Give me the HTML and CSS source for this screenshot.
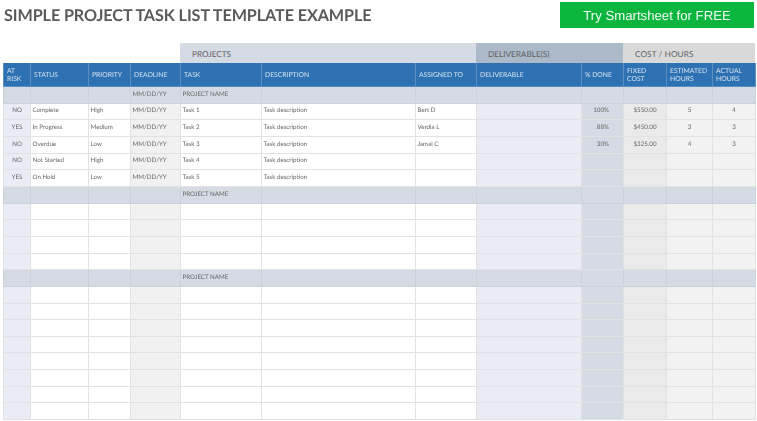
FILE: index.html
```html
<!DOCTYPE html>
<html lang="en">
<head>
<meta charset="utf-8">
<title>Simple Project Task List Template Example</title>
<link rel="stylesheet" href="styles.css">
</head>
<body>
<header class="top">
  <h1 class="title">SIMPLE PROJECT TASK LIST TEMPLATE EXAMPLE</h1>
  <a class="cta" href="#">Try Smartsheet for FREE</a>
</header>
<div class="bands">
  <div class="band band-projects">PROJECTS</div>
  <div class="band band-deliverables">DELIVERABLE(S)</div>
  <div class="band band-cost">COST / HOURS</div>
</div>
<table class="sheet">
  <colgroup>
    <col class="c-risk"><col class="c-status"><col class="c-priority"><col class="c-deadline"><col class="c-task"><col class="c-desc"><col class="c-assigned"><col class="c-deliv"><col class="c-done"><col class="c-fixed"><col class="c-est"><col class="c-actual">
  </colgroup>
  <thead>
    <tr><th>AT<br>RISK</th><th>STATUS</th><th>PRIORITY</th><th>DEADLINE</th><th>TASK</th><th>DESCRIPTION</th><th>ASSIGNED TO</th><th>DELIVERABLE</th><th>% DONE</th><th>FIXED<br>COST</th><th>ESTIMATED<br>HOURS</th><th>ACTUAL<br>HOURS</th></tr>
  </thead>
  <tbody>
    <tr class="group"><td></td><td></td><td></td><td>MM/DD/YY</td><td>PROJECT NAME</td><td></td><td></td><td></td><td></td><td></td><td></td><td></td></tr>
    <tr><td class="mid">NO</td><td>Complete</td><td>High</td><td>MM/DD/YY</td><td>Task 1</td><td>Task description</td><td>Bert D</td><td></td><td class="end">100%</td><td class="mid">$550.00</td><td class="mid">5</td><td class="mid">4</td></tr>
    <tr><td class="mid">YES</td><td>In Progress</td><td>Medium</td><td>MM/DD/YY</td><td>Task 2</td><td>Task description</td><td>Verdia L</td><td></td><td class="end">88%</td><td class="mid">$450.00</td><td class="mid">3</td><td class="mid">3</td></tr>
    <tr><td class="mid">NO</td><td>Overdue</td><td>Low</td><td>MM/DD/YY</td><td>Task 3</td><td>Task description</td><td>Jamal C</td><td></td><td class="end">30%</td><td class="mid">$325.00</td><td class="mid">4</td><td class="mid">3</td></tr>
    <tr><td class="mid">NO</td><td>Not Started</td><td>High</td><td>MM/DD/YY</td><td>Task 4</td><td>Task description</td><td></td><td></td><td></td><td></td><td></td><td></td></tr>
    <tr><td class="mid">YES</td><td>On Hold</td><td>Low</td><td>MM/DD/YY</td><td>Task 5</td><td>Task description</td><td></td><td></td><td></td><td></td><td></td><td></td></tr>
    <tr class="group"><td></td><td></td><td></td><td></td><td>PROJECT NAME</td><td></td><td></td><td></td><td></td><td></td><td></td><td></td></tr>
    <tr><td></td><td></td><td></td><td></td><td></td><td></td><td></td><td></td><td></td><td></td><td></td><td></td></tr>
    <tr><td></td><td></td><td></td><td></td><td></td><td></td><td></td><td></td><td></td><td></td><td></td><td></td></tr>
    <tr><td></td><td></td><td></td><td></td><td></td><td></td><td></td><td></td><td></td><td></td><td></td><td></td></tr>
    <tr><td></td><td></td><td></td><td></td><td></td><td></td><td></td><td></td><td></td><td></td><td></td><td></td></tr>
    <tr class="group"><td></td><td></td><td></td><td></td><td>PROJECT NAME</td><td></td><td></td><td></td><td></td><td></td><td></td><td></td></tr>
    <tr><td></td><td></td><td></td><td></td><td></td><td></td><td></td><td></td><td></td><td></td><td></td><td></td></tr>
    <tr><td></td><td></td><td></td><td></td><td></td><td></td><td></td><td></td><td></td><td></td><td></td><td></td></tr>
    <tr><td></td><td></td><td></td><td></td><td></td><td></td><td></td><td></td><td></td><td></td><td></td><td></td></tr>
    <tr><td></td><td></td><td></td><td></td><td></td><td></td><td></td><td></td><td></td><td></td><td></td><td></td></tr>
    <tr><td></td><td></td><td></td><td></td><td></td><td></td><td></td><td></td><td></td><td></td><td></td><td></td></tr>
    <tr><td></td><td></td><td></td><td></td><td></td><td></td><td></td><td></td><td></td><td></td><td></td><td></td></tr>
    <tr><td></td><td></td><td></td><td></td><td></td><td></td><td></td><td></td><td></td><td></td><td></td><td></td></tr>
    <tr><td></td><td></td><td></td><td></td><td></td><td></td><td></td><td></td><td></td><td></td><td></td><td></td></tr>
  </tbody>
</table>
</body>
</html>
```

FILE: styles.css
```css
* { box-sizing: border-box; }
html, body { margin: 0; height: 421px; overflow: hidden; background: #fff; }
body { padding-left: 3px; font-family: "Lato", "Liberation Sans", sans-serif; color: #666; text-rendering: geometricPrecision; }

.top { display: flex; justify-content: space-between; align-items: flex-start; height: 43px; padding: 2px 3px 0 1px; }
.title { margin: 1.5px 0 0; font-family: "Lato", sans-serif; font-size: 16.2px; font-weight: 700; line-height: 24px; letter-spacing: -0.1px; color: #5a5a5a; white-space: nowrap; filter: blur(0.3px); }
.cta { display: flex; align-items: center; justify-content: center; width: 194px; height: 26px; background: #0cb53e; color: #f2fbf4; font-family: "Liberation Sans", sans-serif; font-size: 13.2px; text-decoration: none; filter: blur(0.25px); }

.bands { display: flex; height: 20px; padding-left: 177px; }
.band { display: flex; align-items: center; padding-top: 1px; font-size: 8.2px; font-weight: 400; color: #606060; }
.band-projects { width: 296px; padding-left: 12px; background: #d5dbe4; }
.band-deliverables { width: 147px; padding-left: 12px; background: #acb9c9; }
.band-cost { width: 132px; padding-left: 12px; background: #d9d9d9; letter-spacing: 0.1px; }

.sheet { border-collapse: collapse; table-layout: fixed; width: 752px; font-size: 6.2px; filter: blur(0.3px); }
.c-risk { width: 27px; background: #e9ecf4; }
.c-status { width: 58px; }
.c-priority { width: 42px; }
.c-deadline { width: 50px; background: #f1f1f1; }
.c-task { width: 81px; }
.c-desc { width: 154px; }
.c-assigned { width: 61px; }
.c-deliv { width: 105px; background: #e9ecf4; }
.c-done { width: 42px; background: #d5dbe4; }
.c-fixed { width: 43px; background: #eaeaea; }
.c-est { width: 46px; background: #f2f2f2; }
.c-actual { width: 43px; background: #f2f2f2; }

.sheet th { height: 23.7px; padding: 1px 3px 0; background: #2e72b4; border: 1px solid #5b8fc4; border-top: 0; color: #d6e2f0; font-size: 6.8px; font-weight: 400; line-height: 8.5px; text-align: left; }
.sheet td { height: 16.65px; padding: 0 1.5px 1.5px; border: 1px solid #e2e2e2; white-space: nowrap; overflow: hidden; }
.sheet .group td { background: #d5dbe4; border-color: #ccd2dc; }
.sheet .mid { text-align: center; }
.sheet .end { text-align: right; padding-right: 14px; }
```
